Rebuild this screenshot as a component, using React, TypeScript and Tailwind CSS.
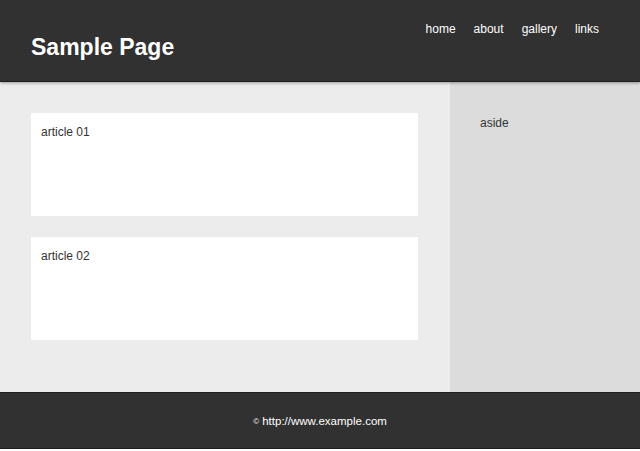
const navItems = ['home', 'about', 'gallery', 'links'];
const articles = ['article 01', 'article 02'];

export default function App() {
  return (
    <div className="min-h-[449px] flex flex-col font-['Liberation_Sans',Arial,sans-serif] text-[#333]">
      <header className="relative z-10 h-[82px] bg-[#313131] border-b border-[#1e1e1e] shadow-[0_1px_3px_rgba(0,0,0,0.35)] flex justify-between px-[31px]">
        <h1 className="mt-[33px] text-[23px] leading-[28px] font-bold text-white">Sample Page</h1>
        <nav className="flex gap-[18px] mt-[22px] mr-[10px] text-[12px] leading-[15px] text-white">
          {navItems.map((item) => (
            <a key={item} href="#" className="h-fit">
              {item}
            </a>
          ))}
        </nav>
      </header>

      <div className="flex flex-1">
        <main className="w-[450px] bg-[#ececec] px-[31px] pt-[31px] pb-[52px] flex flex-col gap-[21px]">
          {articles.map((title) => (
            <article key={title} className="h-[103px] w-[387px] bg-white px-[10px] pt-[12px] text-[12px] leading-[14px]">
              {title}
            </article>
          ))}
        </main>
        <aside className="flex-1 bg-[#dcdcdc] pl-[30px] pt-[34px] text-[12px] leading-[14px]">
          aside
        </aside>
      </div>

      <footer className="h-[57px] bg-[#313131] border-t border-[#1e1e1e] border-b flex items-center justify-center pt-[2px] text-white text-[11.5px]">
        <span>
          <span className="text-[8px] align-middle">©</span> http://www.example.com
        </span>
      </footer>
    </div>
  );
}
